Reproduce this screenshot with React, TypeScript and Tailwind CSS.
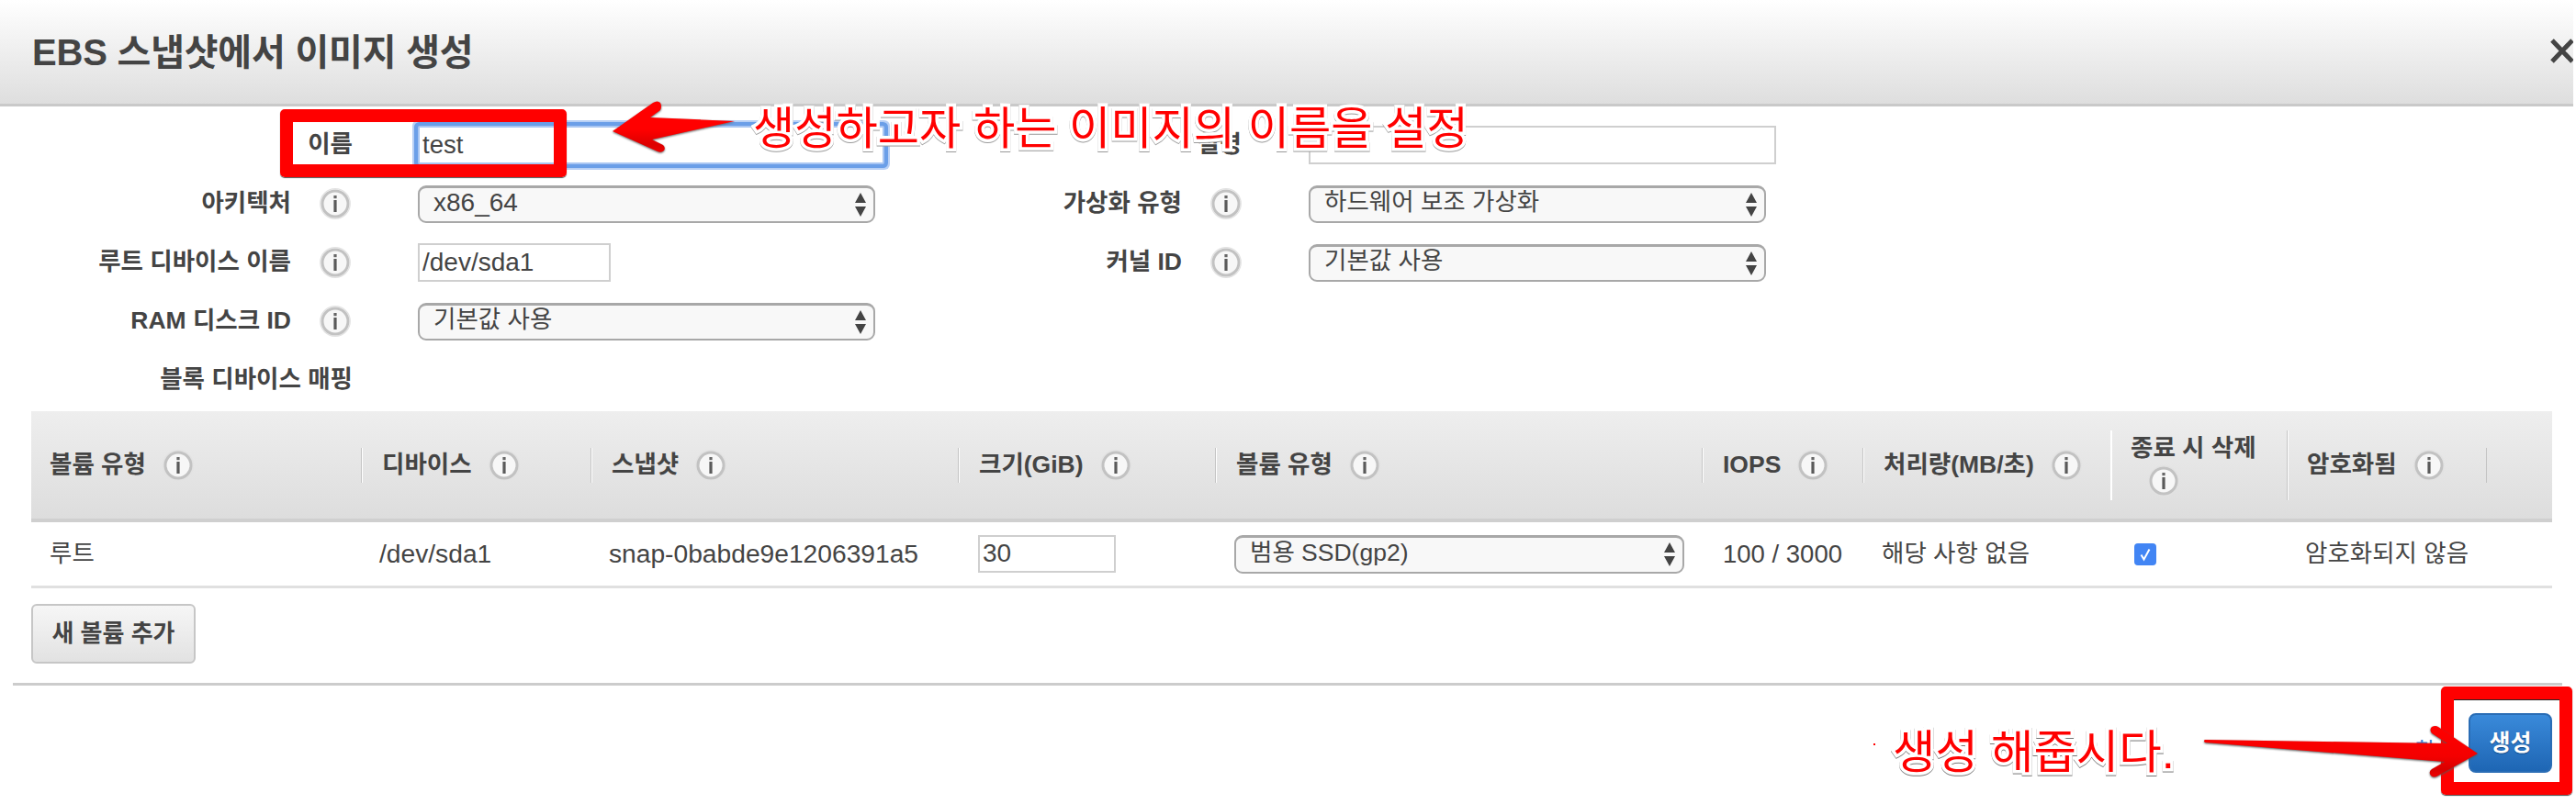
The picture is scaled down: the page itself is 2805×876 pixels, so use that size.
const infoIcon = (
  <svg width="34" height="34" viewBox="0 0 34 34" className="shrink-0">
    <circle cx="17" cy="17" r="16.3" fill="none" stroke="#e2e2e2" strokeWidth="1.2" />
    <circle cx="17" cy="17" r="14" fill="#f7f7f7" stroke="#c2c2c2" strokeWidth="3" />
    <rect x="15.4" y="8" width="3.2" height="3.2" fill="#666" />
    <rect x="15.4" y="13" width="3.2" height="13" fill="#5a5a5a" />
  </svg>
)

function Arrows() {
  return (
    <svg width="14" height="26" viewBox="0 0 14 26" className="shrink-0">
      <path d="M7 0L13 11H1Z M1 15H13L7 26Z" fill="#444" />
    </svg>
  )
}

function SelectBox({ value, className, latin }: { value: string; className: string; latin?: boolean }) {
  return (
    <div className={`flex items-center justify-between rounded-[9px] border-2 border-t-[3px] border-[#a8a8a8] bg-[#f8f8f8] pl-[15px] pr-[7px] text-[#444] ${latin ? "text-[28px]" : "text-[26.5px]"} ${className}`}>
      <span className="-mt-[3px]">{value}</span>
      <Arrows />
    </div>
  )
}

function FormRow({ label, info, width, gap, children }: { label: string; info?: boolean; width: string; gap: string; children?: React.ReactNode }) {
  return (
    <div className={`flex h-[42px] items-center ${gap}`}>
      <div className={`flex items-center justify-end gap-[31px] text-[26.5px] font-bold text-[#444] ${width}`}>
        <span>{label}</span>
        {info && infoIcon}
      </div>
      {children}
    </div>
  )
}

const columns = [
  { label: "볼륨 유형", width: "w-[359px]", sep: false },
  { label: "디바이스", width: "w-[250px]", sep: true },
  { label: "스냅샷", width: "w-[400px]", sep: true },
  { label: "크기(GiB)", width: "w-[280px]", sep: true },
  { label: "볼륨 유형", width: "w-[530px]", sep: true },
  { label: "IOPS", width: "w-[175px]", sep: true },
  { label: "처리량(MB/초)", width: "w-[270px]", sep: true },
]

const inputClass = "border-2 border-[#cfcfcf] bg-white px-[3px] text-[28px] text-[#444] outline-none"

export default function App() {
  return (
    <div className="relative h-[876px] w-[2802px] overflow-hidden bg-white font-['Liberation_Sans','Noto_Sans_CJK_KR',sans-serif] text-[#444]">
      {/* modal title */}
      <header className="flex h-[116px] items-center justify-between border-b-[3px] border-[#c9c9c9] bg-gradient-to-b from-white to-[#dedede] pl-[35px]">
        <h1 className="text-[40px] font-bold tracking-[-0.2px] text-[#444]">EBS 스냅샷에서 이미지 생성</h1>
        <svg width="26" height="27" viewBox="0 0 26 27" className="-mr-[1px] -mt-[3px] shrink-0">
          <path d="M2 2L24 25M24 2L2 25" stroke="#444" strokeWidth="5" />
        </svg>
      </header>

      {/* form */}
      <div className="flex pt-[21px]">
        <div className="flex w-[1000px] flex-col gap-[22px]">
          <FormRow label="이름" width="w-[384px]" gap="gap-[71px]">
            <input readOnly value="test" className="h-[42px] w-[508px] rounded-[2px] border-2 border-[#a9c6f2] bg-white px-[3px] text-[27.5px] text-[#444] shadow-[0_0_0_4px_#6b9fe8,0_0_0_6px_#b8d0f5] outline-none" />
          </FormRow>
          <FormRow label="아키텍처" info width="w-[382px]" gap="gap-[73px]">
            <SelectBox value="x86_64" latin className="h-[41px] w-[498px]" />
          </FormRow>
          <FormRow label="루트 디바이스 이름" info width="w-[382px]" gap="gap-[73px]">
            <input readOnly value="/dev/sda1" className={`${inputClass} h-[42px] w-[210px]`} />
          </FormRow>
          <FormRow label="RAM 디스크 ID" info width="w-[382px]" gap="gap-[73px]">
            <SelectBox value="기본값 사용" className="h-[41px] w-[498px]" />
          </FormRow>
          <FormRow label="블록 디바이스 매핑" width="w-[384px]" gap="gap-[71px]" />
        </div>
        <div className="flex flex-col gap-[22px]">
          <FormRow label="설명" width="w-[352px]" gap="gap-[73px]">
            <input readOnly className={`${inputClass} h-[42px] w-[509px]`} />
          </FormRow>
          <FormRow label="가상화 유형" info width="w-[352px]" gap="gap-[73px]">
            <SelectBox value="하드웨어 보조 가상화" className="h-[41px] w-[498px]" />
          </FormRow>
          <FormRow label="커널 ID" info width="w-[352px]" gap="gap-[73px]">
            <SelectBox value="기본값 사용" className="h-[41px] w-[498px]" />
          </FormRow>
        </div>
      </div>

      {/* block device table */}
      <div className="ml-[34px] mt-[13px] w-[2745px]">
        <div className="flex h-[121px] items-center border-b-[4px] border-[#cfcfcf] bg-gradient-to-b from-[#eeeeee] to-[#dddddd] text-[26.5px] font-bold text-[#444]">
          {columns.map((col, i) => (
            <div key={i} className={col.width}>
              <div className={`flex h-[38px] items-center gap-[18px] ${col.sep ? "border-l border-[#c4c4c4] pl-[22px] shadow-[inset_1px_0_0_#fff]" : "pl-[20px]"}`}>
                <span>{col.label}</span>
                {infoIcon}
              </div>
            </div>
          ))}
          <div className="flex h-[76px] w-[192px] flex-col border-l-2 border-white pl-[20px] leading-[38px]">
            <span className="whitespace-nowrap">종료 시 삭제</span>
            <div className="ml-[19px]">{infoIcon}</div>
          </div>
          <div className="flex h-[76px] w-[217px] items-center gap-[18px] border-l border-[#c4c4c4] pl-[21px] shadow-[inset_1px_0_0_#fff]">
            <span>암호화됨</span>
            {infoIcon}
          </div>
          <div className="h-[38px] w-[72px] border-l border-[#c4c4c4]" />
        </div>
        <div className="flex h-[72px] items-center border-b-[3px] border-[#e0e0e0] text-[26.5px] text-[#444]">
          <div className="w-[359px] pl-[20px]">루트</div>
          <div className="w-[250px] pl-[20px] text-[28.2px]">/dev/sda1</div>
          <div className="w-[400px] pl-[20px] text-[28.2px]">snap-0babde9e1206391a5</div>
          <div className="w-[280px] pl-[22px]">
            <input readOnly value="30" className={`${inputClass} h-[41px] w-[150px]`} />
          </div>
          <div className="w-[530px] pl-[21px]">
            <SelectBox value="범용 SSD(gp2)" className="h-[42px] w-[490px]" />
          </div>
          <div className="w-[175px] whitespace-nowrap pl-[23px] text-[27.5px]">100 / 3000</div>
          <div className="w-[270px] pl-[21px]">해당 사항 없음</div>
          <div className="w-[192px] pl-[26px]">
            <div className="flex h-[24px] w-[24px] items-center justify-center rounded-[4px] bg-[#4285f4]">
              <svg width="14" height="16" viewBox="0 0 14 16">
                <path d="M2.5 8.5L5.5 13.5L11.5 2.5" fill="none" stroke="#fff" strokeWidth="2" />
              </svg>
            </div>
          </div>
          <div className="whitespace-nowrap pl-[20px]">암호화되지 않음</div>
        </div>
        <button className="mt-[17px] block h-[65px] w-[179px] rounded-[6px] border-2 border-[#c6c6c6] bg-gradient-to-b from-[#f6f6f6] to-[#e2e2e2] text-[26px] font-bold text-[#444]">새 볼륨 추가</button>
      </div>

      {/* footer */}
      <div className="ml-[14px] mt-[21px] flex w-[2776px] items-center justify-end gap-[15px] border-t-[3px] border-[#cccccc] pr-[11px] pt-[30px]">
        <span className="mt-[16px] text-[24px] leading-[26px] text-[#3b82d6]">취소</span>
        <button className="h-[65px] w-[91px] rounded-[8px] border-2 border-[#2a6db5] bg-gradient-to-b from-[#3a8ada] to-[#1e66b4] text-[25px] font-bold text-white [text-shadow:0_1px_1px_#124a86]">생성</button>
      </div>

      {/* annotations drawn over the screenshot */}
      <div className="absolute left-[305px] top-[119px] h-[74px] w-[312px] rounded-[5px] border-[14px] border-[#ff0000] shadow-[0_1px_1px_#555]" />
      <div className="absolute left-[2658px] top-[748px] h-[118px] w-[143px] rounded-[5px] border-[14px] border-[#ff0000] shadow-[0_1px_1px_#444,inset_0_1px_0_#222]" />

      <svg className="absolute left-[660px] top-[105px] [filter:drop-shadow(0_1px_1px_#666)]" width="150" height="70" viewBox="660 105 150 70">
        <defs>
          <linearGradient id="arrowOne" x1="0" y1="0" x2="0" y2="1">
            <stop offset="0" stopColor="#ff0000" />
            <stop offset="0.55" stopColor="#ff0000" />
            <stop offset="0.85" stopColor="#dd0000" />
            <stop offset="1" stopColor="#ee0000" />
          </linearGradient>
        </defs>
        <path d="M667 143L711 112Q716 109 719 112Q721 116 719 120L708 128L800 132L710 152L722 158Q725 161 723 164Q720 167 716 165Z" fill="url(#arrowOne)" />
      </svg>
      <svg className="absolute left-[2395px] top-[785px] [filter:drop-shadow(0_1px_1px_#555)]" width="310" height="70" viewBox="2395 785 310 70">
        <defs>
          <linearGradient id="arrowTwo" x1="0" y1="0" x2="0" y2="1">
            <stop offset="0" stopColor="#ff0000" />
            <stop offset="0.6" stopColor="#f40000" />
            <stop offset="0.85" stopColor="#d80000" />
            <stop offset="1" stopColor="#ee0000" />
          </linearGradient>
        </defs>
        <path d="M2401 806L2665 810L2648 799Q2645 795 2648 792Q2652 790 2655 792L2698 821L2655 845Q2650 848 2647 845Q2644 841 2648 838L2662 830L2401 809Q2399 807 2401 806Z" fill="url(#arrowTwo)" />
      </svg>

      <span className="absolute left-[820px] top-[103px] whitespace-nowrap text-[49.2px] text-[#ff0000] [-webkit-text-stroke:7px_#fff] [paint-order:stroke_fill] [filter:drop-shadow(0_1px_0_#999)]">생성하고자 하는 이미지의 이름을 설정</span>
      <span className="absolute left-[2061px] top-[782px] whitespace-nowrap text-[50.5px] text-[#ff0000] [-webkit-text-stroke:7px_#fff] [paint-order:stroke_fill] [filter:drop-shadow(0_1px_0_#777)]">생성 해줍시다.</span>
      <div className="absolute left-[2040px] top-[810px] h-[2px] w-[2px] bg-[#ff0000]" />
    </div>
  )
}
